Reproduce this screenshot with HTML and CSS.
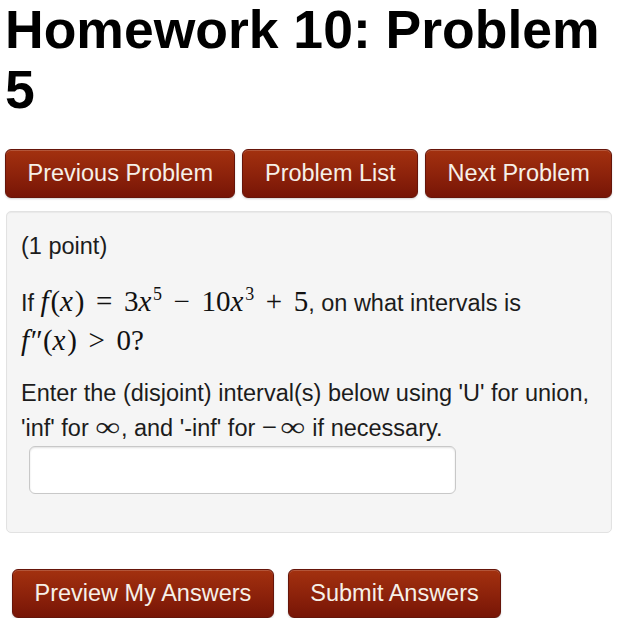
FILE: index.html
```html
<!DOCTYPE html>
<html lang="en">
<head>
<meta charset="utf-8">
<title>Homework 10: Problem 5</title>
<link rel="stylesheet" href="styles.css">
</head>
<body>
<div class="page">
  <h1 class="title">Homework 10: Problem 5</h1>
  <nav class="nav">
    <a class="btn">Previous Problem</a>
    <a class="btn">Problem List</a>
    <a class="btn">Next Problem</a>
  </nav>
  <div class="well">
    <p class="points">(1 point)</p>
    <p class="question">If <span class="math"><span class="mi">f</span>(<span class="mi">x</span>)<span class="mo">=</span>3<span class="mi">x</span><sup>5</sup><span class="mo">&minus;</span>10<span class="mi">x</span><sup>3</sup><span class="mo">+</span>5</span>, on what intervals is<br><span class="math"><span class="mi">f</span>&Prime;(<span class="mi">x</span>)<span class="mo">&gt;</span>0?</span></p>
    <p class="hint">Enter the (disjoint) interval(s) below using 'U' for union, 'inf' for <span class="sym"><span class="inf">&infin;</span></span>, and '-inf' for <span class="sym"><span class="neg">&minus;</span><span class="inf">&infin;</span></span> if necessary.</p>
    <input class="answer" type="text" aria-label="answer">
  </div>
  <div class="actions">
    <button class="btn" type="button">Preview My Answers</button>
    <button class="btn" type="button">Submit Answers</button>
  </div>
</div>
</body>
</html>
```

FILE: styles.css
```css
html, body {
  margin: 0;
  padding: 0;
  background: #ffffff;
}

body {
  font-family: "Liberation Sans", Arial, sans-serif;
  color: #1c1c1c;
}

.page {
  padding: 0 5px;
}

.title {
  margin: 0;
  font-size: 53.5px;
  line-height: 60px;
  font-weight: bold;
  color: #000000;
}

.nav {
  display: flex;
  gap: 7px;
  margin-top: 29px;
}

.btn {
  display: inline-block;
  font-family: "Liberation Sans", Arial, sans-serif;
  font-size: 23.5px;
  line-height: 27px;
  padding: 10px 21.5px;
  color: #f6f0e8;
  border: 1px solid #66150a;
  border-radius: 6px;
  background: linear-gradient(to bottom, #a3310f 0%, #8e230b 50%, #771506 100%);
  box-shadow: inset 0 1px 0 rgba(255, 255, 255, 0.18), 0 1px 2px rgba(0, 0, 0, 0.18);
  text-decoration: none;
  white-space: nowrap;
}

.well {
  margin: 13px 1px 0 1px;
  padding: 17px 14px 17px 14px;
  background: #f5f5f5;
  border: 1px solid #e2e2e2;
  border-radius: 5px;
  box-shadow: inset 0 1px 1px rgba(0, 0, 0, 0.05);
  font-size: 23.5px;
  line-height: 35px;
}

.well p {
  margin: 0;
}

.points {
  margin-bottom: 20px !important;
}

.question {
  line-height: 39px;
  margin-bottom: 14px !important;
}

.math {
  font-family: "Liberation Serif", "Times New Roman", serif;
  font-size: 29px;
  line-height: 1;
  white-space: nowrap;
  color: #111;
}

.mi {
  font-style: italic;
  margin-right: 0.06em;
}

.mo {
  margin: 0 0.4em;
}

.math sup {
  font-size: 0.62em;
  line-height: 0;
  vertical-align: 0.62em;
}

.sym {
  display: inline-block;
  font-family: "Liberation Serif", "Times New Roman", serif;
  font-size: 27px;
  line-height: 20px;
  white-space: nowrap;
}

.inf {
  display: inline-block;
  width: 0.95em;
  text-align: center;
  transform: scaleX(1.3);
}

.neg {
  display: inline-block;
  width: 0.68em;
  text-align: left;
}

.answer {
  display: block;
  box-sizing: border-box;
  width: 427px;
  height: 48px;
  margin: 0 0 21px 8px;
  border: 1px solid #c8c8c8;
  border-radius: 6px;
  background: #ffffff;
  box-shadow: inset 0 1px 2px rgba(0, 0, 0, 0.12);
}

.actions {
  display: flex;
  gap: 14px;
  margin: 36px 0 0 7px;
}
```
